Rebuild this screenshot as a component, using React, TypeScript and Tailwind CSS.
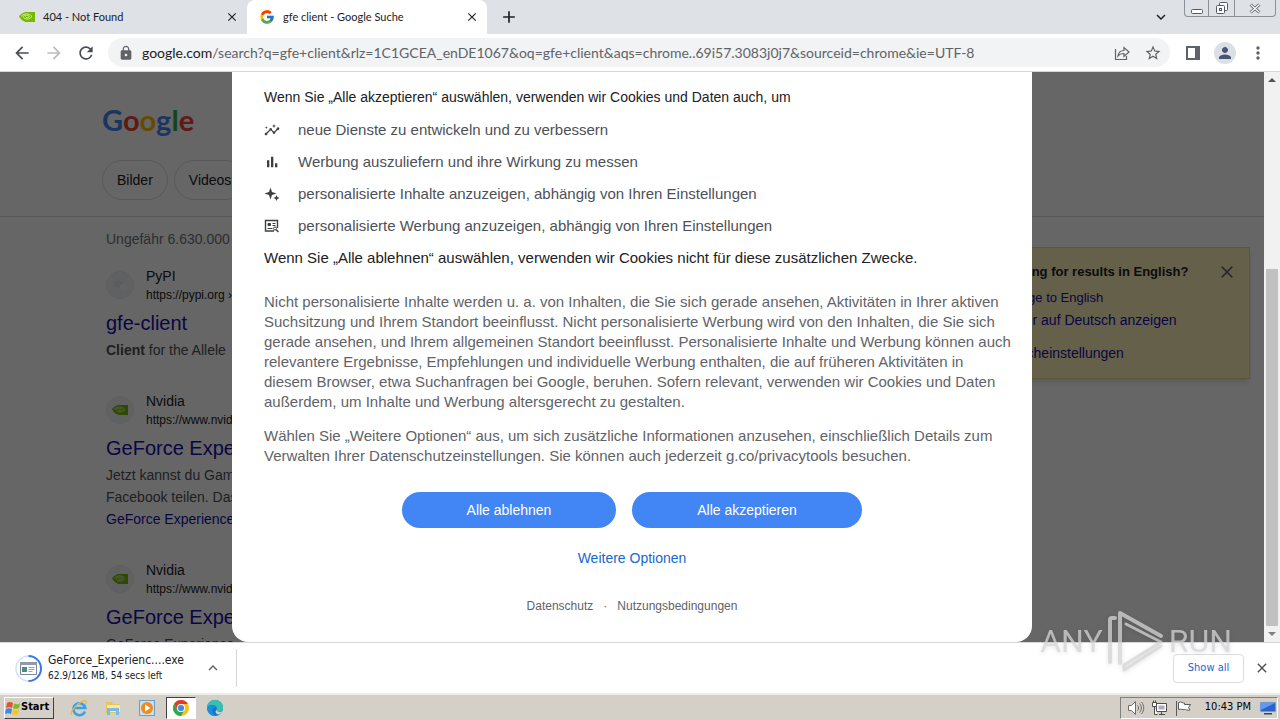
import React from 'react';
import {
  MdAdd,
  MdArrowBack,
  MdArrowForward,
  MdClose,
  MdExpandLess,
  MdExpandMore,
  MdInsights,
  MdLock,
  MdMoreVert,
  MdPerson,
  MdRefresh,
  MdStarBorder,
} from 'react-icons/md';
import { FcGoogle } from 'react-icons/fc';

const NvidiaIcon: React.FC<{ className?: string }> = ({ className }) => (
  <svg viewBox="0 0 16 12" className={className}>
    <path d="M6 1h10v10H6z" fill="#76b900" />
    <path d="M6 1C3 2 1 4 0 5.500 2 8.500 4 10.500 7 11z" fill="#76b900" />
    <path
      d="M2 5.500C5 2 10 2 13 5.500 10 9 6 9 4 5.500 6 3.500 9 4 10.500 5.500 9 7.300 7 7 6.500 5.500"
      fill="none"
      stroke="#e9f5cf"
      strokeWidth="0.800"
    />
  </svg>
);

const PypiIcon: React.FC = () => (
  <svg viewBox="0 0 16 16" className="h-4 w-4">
    <path d="m2 5 5-2 4 2v4l-5 2-4-2z" fill="#e3e5e8" />
    <path d="m8 8 4-2 3 1.500V12l-4 2-3-1.500z" fill="#fafafa" />
  </svg>
);

const BarsIcon: React.FC = () => (
  <svg viewBox="0 0 24 24" className="h-4 w-4" fill="currentColor">
    <path d="M4.500 9.200H8V20H4.500zM10.500 4H14v16h-3.500zM16.500 14H20v6h-3.500z" />
  </svg>
);

const SparkIcon: React.FC = () => (
  <svg viewBox="0 0 16 16" className="h-4 w-4" fill="currentColor">
    <path d="M6.500 1.500 8 6l4.500 1.500L8 9l-1.500 4.500L5 9 .500 7.500 5 6z" />
    <path d="m12.500 9 .900 2.100 2.100.900-2.100.900-.900 2.100-.900-2.100L9.500 12l2.100-.900z" />
  </svg>
);

const AdsIcon: React.FC = () => (
  <svg viewBox="0 0 16 16" className="h-4 w-4" fill="none" stroke="#3c4043">
    <path d="M10 13H1.500V2.500h12V10" strokeWidth="1.400" />
    <path d="M4 5.500h2.500v2H4z" fill="#3c4043" />
    <path d="M8.500 5.500h3M8.500 7.500h3M3.500 10.500h5" />
    <circle cx="11" cy="10.500" r="1.500" />
    <path d="m12 11.500 2.500 2.500" strokeWidth="1.400" />
  </svg>
);

const Tab: React.FC<{ title: string; icon: React.ReactNode; active?: boolean }> = ({ title, icon, active }) => (
  <div
    className={`flex h-full w-60 items-center rounded-t-lg pr-2 pl-3 text-[#202124] ${active ? 'bg-white' : ''}`}
  >
    {icon}
    <span className="ml-2 flex-1 text-[11px] whitespace-nowrap">{title}</span>
    <button aria-label="Close tab">
      <MdClose className="h-3.5 w-3.5" />
    </button>
  </div>
);

const WindowControls: React.FC = () => (
  <div className="flex h-[17px] self-start rounded-b border border-t-0 border-[#8b9099] text-[#555a62]">
    <button aria-label="Minimize" className="flex w-6 items-end justify-center border-r border-[#8b9099] pb-0.5">
      <svg viewBox="0 0 12 5" className="h-[5px] w-3" fill="#fff" stroke="currentColor">
        <rect x="0.500" y="0.500" width="11" height="4" rx="1" />
      </svg>
    </button>
    <button aria-label="Restore" className="flex w-[26px] items-center justify-center border-r border-[#8b9099]">
      <svg viewBox="0 0 14 13" className="h-[13px] w-3.5" fill="#fff" stroke="currentColor">
        <rect x="4.500" y="0.500" width="8" height="8" rx="1" />
        <rect x="1.500" y="3.500" width="8" height="8" rx="1" />
        <rect x="4.500" y="6.500" width="2" height="2" />
      </svg>
    </button>
    <button aria-label="Close" className="flex w-10 items-center justify-center">
      <svg viewBox="0 0 12 11" className="h-[11px] w-3" fill="none">
        <path d="m1.500 1.500 9 8M10.500 1.500l-9 8" stroke="#555a62" strokeWidth="3" />
        <path d="m1.500 1.500 9 8M10.500 1.500l-9 8" stroke="#fff" strokeWidth="1.300" />
      </svg>
    </button>
  </div>
);

const TabStrip: React.FC = () => (
  <div className="flex h-[34px] shrink-0 items-center bg-[#dee1e6] pr-1 pl-[7px] font-['Lato',sans-serif]">
    <Tab title="404 - Not Found" icon={<NvidiaIcon className="h-3 w-4" />} />
    <Tab title="gfe client - Google Suche" icon={<FcGoogle className="h-4 w-4" />} active />
    <button aria-label="New tab" className="ml-3 text-[#202124]">
      <MdAdd className="h-5 w-5" />
    </button>
    <button aria-label="Search tabs" className="mr-3.5 ml-auto text-[#202124]">
      <MdExpandMore className="h-[18px] w-[18px]" />
    </button>
    <WindowControls />
  </div>
);

const Toolbar: React.FC = () => (
  <div className="flex h-[38px] shrink-0 items-center border-b border-[#d5d7da] bg-white pr-3 pl-3 text-[#5f6368]">
    <button aria-label="Back" className="text-[#4a4d51]">
      <MdArrowBack className="h-5 w-5" />
    </button>
    <button aria-label="Forward" className="ml-3 text-[#babcbe]">
      <MdArrowForward className="h-5 w-5" />
    </button>
    <button aria-label="Reload" className="ml-3 text-[#4a4d51]">
      <MdRefresh className="h-5 w-5" />
    </button>
    <div className="ml-3 flex h-[29px] flex-1 items-center rounded-full bg-[#f1f3f4] px-2">
      <MdLock className="ml-0.5 h-4 w-4" />
      <div className="ml-2 flex-1 overflow-hidden font-['Lato',sans-serif] text-sm whitespace-nowrap">
        <span className="text-[#202124]">google.com</span>
        /search?q=gfe+client&amp;rlz=1C1GCEA_enDE1067&amp;oq=gfe+client&amp;aqs=chrome..69i57.3083j0j7&amp;sourceid=chrome&amp;ie=UTF-8
      </div>
      <button aria-label="Share">
        <svg viewBox="0 0 16 16" className="h-4 w-4" fill="none" stroke="currentColor" strokeWidth="1.200">
          <path d="M1.500 4v10.500h11V11" />
          <path d="M4 11c.5-4 2.500-5.500 6-5.500V2.500L15 7l-5 4.500v-3C7.500 8.500 5.500 9 4 11z" />
        </svg>
      </button>
      <button aria-label="Bookmark" className="ml-3.5">
        <MdStarBorder className="h-[18px] w-[18px]" />
      </button>
    </div>
    <button aria-label="Side panel" className="ml-4">
      <svg viewBox="0 0 14 14" className="h-3.5 w-3.5">
        <path d="M0 0h14v14H0zM2 2v10h7V2z" fill="currentColor" fillRule="evenodd" />
      </svg>
    </button>
    <button
      aria-label="Profile"
      className="ml-3.5 flex h-[22px] w-[22px] items-center justify-center rounded-full bg-[#dbdfe6] text-[#4a5573]"
    >
      <MdPerson className="h-[18px] w-[18px]" />
    </button>
    <button aria-label="Menu" className="ml-3">
      <MdMoreVert className="h-5 w-5" />
    </button>
  </div>
);

interface SearchResult {
  site: string;
  url: string;
  title: string;
  icon: React.ReactNode;
  snippet: React.ReactNode;
}

const results: SearchResult[] = [
  {
    site: 'PyPI',
    url: 'https://pypi.org ›',
    title: 'gfe-client',
    icon: <PypiIcon />,
    snippet: (
      <p>
        <b>Client</b> for the Allele
      </p>
    ),
  },
  {
    site: 'Nvidia',
    url: 'https://www.nvidia',
    title: 'GeForce Experience',
    icon: <NvidiaIcon className="h-3 w-4" />,
    snippet: (
      <>
        <p>Jetzt kannst du Games</p>
        <p>Facebook teilen. Das</p>
        <a href="#" className="text-[#1a0dab]">
          GeForce Experience
        </a>
      </>
    ),
  },
  {
    site: 'Nvidia',
    url: 'https://www.nvidia',
    title: 'GeForce Experience',
    icon: <NvidiaIcon className="h-3 w-4" />,
    snippet: <p>GeForce Experience</p>,
  },
];

const ResultItem: React.FC<{ result: SearchResult }> = ({ result }) => (
  <div>
    <div className="flex items-center">
      <span className="flex h-7 w-7 items-center justify-center rounded-full border border-[#ecedef] bg-[#f1f3f4]">
        {result.icon}
      </span>
      <div className="ml-3 text-[#202124]">
        <p className="text-sm leading-5">{result.site}</p>
        <p className="text-xs leading-[18px]">{result.url}</p>
      </div>
    </div>
    <h3 className="mt-[5px] text-xl leading-7">
      <a href="#" className="text-[#1a0dab]">
        {result.title}
      </a>
    </h3>
    <div className="mt-0.5 text-sm leading-[22px] text-[#4d5156]">{result.snippet}</div>
  </div>
);

const logoLetters = [
  { char: 'G', color: 'text-[#4285f4]' },
  { char: 'o', color: 'text-[#ea4335]' },
  { char: 'o', color: 'text-[#fbbc05]' },
  { char: 'g', color: 'text-[#4285f4]' },
  { char: 'l', color: 'text-[#34a853]' },
  { char: 'e', color: 'text-[#ea4335]' },
];

const SearchPage: React.FC = () => (
  <div className="bg-white">
    <header className="border-b border-[#dadce0] pt-[26px] pb-4 pl-[102px]">
      <div className="font-['Lato',sans-serif] text-[29px] leading-[44px] font-bold">
        {logoLetters.map((letter, i) => (
          <span key={i} className={letter.color}>
            {letter.char}
          </span>
        ))}
      </div>
      <nav className="mt-[18px] flex gap-1.5 text-sm text-[#202124]">
        <a href="#" className="flex h-10 items-center rounded-full border border-[#dadce0] px-3.5">
          Bilder
        </a>
        <a href="#" className="flex h-10 items-center rounded-full border border-[#dadce0] px-3.5">
          Videos
        </a>
      </nav>
    </header>
    <div className="flex items-start justify-between pr-3.5 pl-[106px]">
      <main className="pt-3">
        <p className="text-sm leading-5 text-[#70757a]">Ungefähr 6.630.000</p>
        <div className="mt-[17px] flex w-[652px] flex-col gap-[30px]">
          {results.map((result, i) => (
            <ResultItem key={i} result={result} />
          ))}
        </div>
      </main>
      <aside className="mt-[30px] h-[132px] w-[272px] border border-[#e6d58c] bg-[#fdefba] pt-3.5 pr-3 pl-[18px] text-sm text-[#1a0dab] shadow-md">
        <div className="flex items-start justify-between">
          <h2 className="text-[13px] leading-5 font-bold text-[#202124]">Looking for results in English?</h2>
          <button aria-label="Schließen" className="text-[#5f6368]">
            <MdClose className="h-5 w-5" />
          </button>
        </div>
        <a href="#" className="mt-1.5 block text-[13px] leading-5">
          Change to English
        </a>
        <a href="#" className="mt-0.5 block leading-5">
          Weiter auf Deutsch anzeigen
        </a>
        <a href="#" className="mt-[13px] block leading-5">
          Spracheinstellungen
        </a>
      </aside>
    </div>
  </div>
);

const purposes = [
  { icon: <MdInsights className="h-4 w-4" />, text: 'neue Dienste zu entwickeln und zu verbessern' },
  { icon: <BarsIcon />, text: 'Werbung auszuliefern und ihre Wirkung zu messen' },
  { icon: <SparkIcon />, text: 'personalisierte Inhalte anzuzeigen, abhängig von Ihren Einstellungen' },
  { icon: <AdsIcon />, text: 'personalisierte Werbung anzuzeigen, abhängig von Ihren Einstellungen' },
];

const ConsentDialog: React.FC = () => (
  <div
    role="dialog"
    aria-label="Cookies und Daten"
    className="h-full w-[800px] rounded-b-2xl bg-white px-8 pt-[15px] text-[15px] leading-5 text-[#5f6368]"
  >
    <p className="text-sm leading-5 text-[#202124]">
      Wenn Sie „Alle akzeptieren“ auswählen, verwenden wir Cookies und Daten auch, um
    </p>
    <ul className="mt-[7px]">
      {purposes.map((purpose) => (
        <li key={purpose.text} className="flex h-8 items-center text-[#4d5156]">
          <span className="mr-[18px] text-[#3c4043]">{purpose.icon}</span>
          {purpose.text}
        </li>
      ))}
    </ul>
    <p className="mt-1.5 text-[#202124]">
      Wenn Sie „Alle ablehnen“ auswählen, verwenden wir Cookies nicht für diese zusätzlichen Zwecke.
    </p>
    <p className="mt-6 whitespace-nowrap">
      Nicht personalisierte Inhalte werden u. a. von Inhalten, die Sie sich gerade ansehen, Aktivitäten in Ihrer aktiven
      <br />
      Suchsitzung und Ihrem Standort beeinflusst. Nicht personalisierte Werbung wird von den Inhalten, die Sie sich
      <br />
      gerade ansehen, und Ihrem allgemeinen Standort beeinflusst. Personalisierte Inhalte und Werbung können auch
      <br />
      relevantere Ergebnisse, Empfehlungen und individuelle Werbung enthalten, die auf früheren Aktivitäten in
      <br />
      diesem Browser, etwa Suchanfragen bei Google, beruhen. Sofern relevant, verwenden wir Cookies und Daten
      <br />
      außerdem, um Inhalte und Werbung altersgerecht zu gestalten.
    </p>
    <p className="mt-3.5 whitespace-nowrap">
      Wählen Sie „Weitere Optionen“ aus, um sich zusätzliche Informationen anzusehen, einschließlich Details zum
      <br />
      Verwalten Ihrer Datenschutzeinstellungen. Sie können auch jederzeit g.co/privacytools besuchen.
    </p>
    <div className="mt-[26px] flex justify-center gap-4 text-sm text-white">
      <button className="h-9 w-[214px] rounded-full bg-[#4285f4]">Alle ablehnen</button>
      <button className="h-9 w-[230px] rounded-full bg-[#4285f4]">Alle akzeptieren</button>
    </div>
    <div className="mt-5 text-center text-sm leading-5">
      <a href="#" className="text-[#1967d2]">
        Weitere Optionen
      </a>
    </div>
    <div className="mt-[30px] flex justify-center gap-2.5 text-xs leading-4">
      <a href="#">Datenschutz</a>
      <span>·</span>
      <a href="#">Nutzungsbedingungen</a>
    </div>
  </div>
);

const Scrollbar: React.FC = () => (
  <div className="flex w-4 shrink-0 flex-col items-center bg-[#f1f1f1] py-1.5">
    <svg viewBox="0 0 8 4" className="h-1 w-2" fill="#505050">
      <path d="m0 4 4-4 4 4z" />
    </svg>
    <div className="mt-[187px] mb-1.5 w-3 flex-1 bg-[#c1c1c1]" />
    <svg viewBox="0 0 8 4" className="h-1 w-2" fill="#808080">
      <path d="m0 0 4 4 4-4z" />
    </svg>
  </div>
);

const DownloadBar: React.FC = () => (
  <div className="flex h-[51px] shrink-0 items-center border-t border-[#d5d7da] bg-white pr-2.5 pl-[15px] text-[#202124]">
    <svg viewBox="0 0 27 27" className="h-[27px] w-[27px]" fill="none">
      <circle cx="13.500" cy="13.500" r="12.500" stroke="#d3e0f5" strokeWidth="1.500" />
      <path d="M13.500 1a12.500 12.500 0 0 1 0 25" stroke="#3b78e7" strokeWidth="2" />
      <path d="M5.500 7.500h16v12h-16z" fill="#fff" stroke="#7b8794" />
      <path d="M5 7h17v3H5z" fill="#8f9ba8" />
      <path d="M7 12h5v5H7z" fill="#4c8c80" />
      <path d="M13.500 12.500h6M13.500 14.500h6M13.500 16.500h4" stroke="#9aa5b1" />
    </svg>
    <div className="ml-1.5 w-[154px]">
      <p className="text-xs leading-4">GeForce_Experienc....exe</p>
      <p className="text-[10px] leading-4">62.9/126 MB, 54 secs left</p>
    </div>
    <button aria-label="Download options" className="ml-0.5 text-[#5f6368]">
      <MdExpandLess className="h-[18px] w-[18px]" />
    </button>
    <div className="ml-3.5 h-[38px] w-px bg-[#d5d7da]" />
    <button className="ml-auto h-[29px] w-[71px] rounded border border-[#dadce0] text-[11px] text-[#1967d2]">
      Show all
    </button>
    <button aria-label="Close download bar" className="ml-2.5 text-[#4a4d51]">
      <MdClose className="h-4 w-4" />
    </button>
  </div>
);

const WindowsFlag: React.FC = () => (
  <svg viewBox="0 0 16 16" className="h-4 w-4">
    <path d="M2 3c2-1.500 4-1 6 0L7 8C5 7 3 7 1 8z" fill="#e8532a" />
    <path d="M9 3.500c2 1 4 1 6 0L14 8c-2 1-4 1-6 .500z" fill="#7fba2c" />
    <path d="M1 9c2-1 4-1 6 0l-1 5c-2-1-4-1-6 0z" fill="#3a8be0" />
    <path d="M8 9.500c2 1 4 1 6 0L13 14c-2 1-4 1-6 .500z" fill="#fcc419" />
  </svg>
);

const ExplorerIcon: React.FC = () => (
  <svg viewBox="0 0 18 18" className="h-[18px] w-[18px]" fill="none">
    <path d="M15 12.500A6 6 0 1 1 15.300 9H5" stroke="#3ba0e6" strokeWidth="2.600" />
    <path d="M2 15.500C-1 15 5 6 11 3c5-2.500 6-1 4.500 2" stroke="#f1b92e" strokeWidth="1.300" />
  </svg>
);

const FolderIcon: React.FC = () => (
  <svg viewBox="0 0 18 18" className="h-[18px] w-[18px]">
    <path d="M2 3h6l1 2h7v9H2z" fill="#e8c35a" />
    <path d="M3 6h13v7H3z" fill="#fbe9a3" />
    <path d="M3 9h12v7h-3v-4H6v4H3z" fill="#75bde8" />
  </svg>
);

const MediaPlayerIcon: React.FC = () => (
  <svg viewBox="0 0 18 18" className="h-[18px] w-[18px]">
    <rect x="1.500" y="1.500" width="15" height="15" fill="#c6dff5" stroke="#6c9fd0" />
    <circle cx="9" cy="9" r="6" fill="#f28a1b" />
    <path d="M7 5.500 12.500 9 7 12.500z" fill="#fff" />
  </svg>
);

const ChromeIcon: React.FC = () => (
  <svg viewBox="0 0 18 18" className="h-[18px] w-[18px]">
    <circle cx="9" cy="9" r="8" fill="#fbc116" />
    <path d="M2.070 5A8 8 0 0 1 15.930 5H9a4 4 0 0 0-3.460 6z" fill="#e33b2e" />
    <path d="M2.070 5A8 8 0 0 0 9 17l3.460-6a4 4 0 0 1-6.920 0z" fill="#2da94f" />
    <circle cx="9" cy="9" r="4" fill="#fff" />
    <circle cx="9" cy="9" r="3.100" fill="#4285f4" />
  </svg>
);

const EdgeIcon: React.FC = () => (
  <svg viewBox="0 0 18 18" className="h-[18px] w-[18px]">
    <circle cx="9" cy="9" r="8" fill="#1673c8" />
    <path d="M1 9a8 8 0 0 1 16-.500c0 3-2 4-4.500 4-2 0-2.500-.800-2-1.500C12 8 9 6 6 6 3.500 6 1.500 7 1 9z" fill="#35c1b1" />
    <path d="M1 9c1-2.500 3-3 5-3 2.500 0 4.500 1.500 4.800 3C8 7.500 6 9.500 6.500 12c.400 2.500 2 4 4 4.800A8 8 0 0 1 1 9z" fill="#1b8de0" />
    <path d="M10.500 11c.800 2 3.500 2.500 6 1-1 2-2.500 3.500-4 3.500-2.500 0-4-3-2-4.500z" fill="#d4d0c8" />
  </svg>
);

const Taskbar: React.FC = () => (
  <div className="flex h-[27px] shrink-0 items-center border-t-2 border-[#eeece7] bg-[#d4d0c8] pr-0.5 pl-1 text-black">
    <button className="flex h-[22px] w-[50px] items-center border border-t-white border-r-[#404040] border-b-[#404040] border-l-white text-[11px] font-bold">
      <WindowsFlag />
      Start
    </button>
    <div className="ml-2 flex items-center">
      <button aria-label="Internet Explorer" className="flex w-[34px] justify-center">
        <ExplorerIcon />
      </button>
      <button aria-label="Explorer" className="flex w-[34px] justify-center">
        <FolderIcon />
      </button>
      <button aria-label="Media Player" className="flex w-[34px] justify-center">
        <MediaPlayerIcon />
      </button>
      <button
        aria-label="Chrome"
        className="mx-0.5 flex h-[22px] w-[30px] items-center justify-center border border-t-[#404040] border-r-white border-b-white border-l-[#404040] bg-white"
      >
        <ChromeIcon />
      </button>
      <button aria-label="Edge" className="flex w-[34px] justify-center">
        <EdgeIcon />
      </button>
    </div>
    <div className="ml-auto flex h-[22px] items-center border border-t-[#808080] border-r-white border-b-white border-l-[#808080] pl-1.5 text-[11px]">
      <svg viewBox="0 0 18 16" className="h-4 w-[18px]" fill="none" stroke="#6b6b6b">
        <path d="M1.500 5.500h3l4-4v13l-4-4h-3z" fill="#fff" />
        <path d="M10.500 5.500c1.500 1.500 1.500 3.500 0 5M12.500 3.500c2.500 3 2.500 6 0 9M14.500 2c3 4 3 8 0 12" />
      </svg>
      <svg viewBox="0 0 16 16" className="ml-1.5 h-4 w-4" fill="none" stroke="#4d4d4d">
        <path d="M5.500 3.500h10v8h-10z" fill="#fff" />
        <path d="M7.500 5.500h6v4h-6z" fill="#a9afb6" stroke="none" />
        <path d="M8 14.500h6M10.500 11.500v3" />
        <path d="M1.500 2.500h4v4h-4zM2.500.500v2M4.500.500v2M3.500 6.500v8h3" fill="#fff" />
      </svg>
      <svg viewBox="0 0 18 16" className="ml-2 h-4 w-[18px]" stroke="#5a5a5a">
        <path d="M1.500 1v15M3.500 2.500c3-1.500 4 1 6 .500v1.500h6l-2 3 1.500 2.500c-3 1-4-1-5.500-.500-2 .500-3-1-6 0z" fill="#fff" />
      </svg>
      <span className="ml-3">10:43 PM</span>
      <svg viewBox="0 0 18 16" className="ml-2 h-4 w-[18px]">
        <path d="M1 2h16v10H1z" fill="#2a62c9" stroke="#c3cbd8" />
        <path d="M2 3h14L2 10z" fill="#5d9df0" />
        <path d="M5 13h8v1.500H5z" fill="#3c4654" />
      </svg>
    </div>
  </div>
);

const Watermark: React.FC = () => (
  <div className="pointer-events-none absolute right-12 bottom-12 flex items-center gap-1 font-['Roboto',sans-serif] text-[32px] leading-[62px] text-[#d6d6d6]/75 drop-shadow-sm">
    <span>ANY</span>
    <svg viewBox="0 0 58 62" className="h-[62px] w-[58px]" fill="none" stroke="currentColor" strokeWidth="4">
      <path d="M8 8H5a2 2 0 0 0-2 2v42" strokeLinecap="round" />
      <path d="M13 53V3l41 23" strokeLinecap="round" strokeLinejoin="round" />
      <path d="M19 14l35 18-37 23v5l37-24" strokeLinecap="round" strokeLinejoin="round" strokeWidth="3" />
    </svg>
    <span>RUN</span>
  </div>
);

const App: React.FC = () => (
  <div className="relative flex h-screen w-full flex-col overflow-hidden bg-white font-['DejaVu_Sans_Condensed','DejaVu_Sans',sans-serif]">
    <TabStrip />
    <Toolbar />
    <div className="flex min-h-0 flex-1 font-['Liberation_Sans',Arial,sans-serif]">
      <div className="relative flex-1 overflow-hidden">
        <SearchPage />
        <div className="absolute inset-0 flex justify-center bg-black/60">
          <ConsentDialog />
        </div>
      </div>
      <Scrollbar />
    </div>
    <DownloadBar />
    <Taskbar />
    <Watermark />
  </div>
);

export default App;
